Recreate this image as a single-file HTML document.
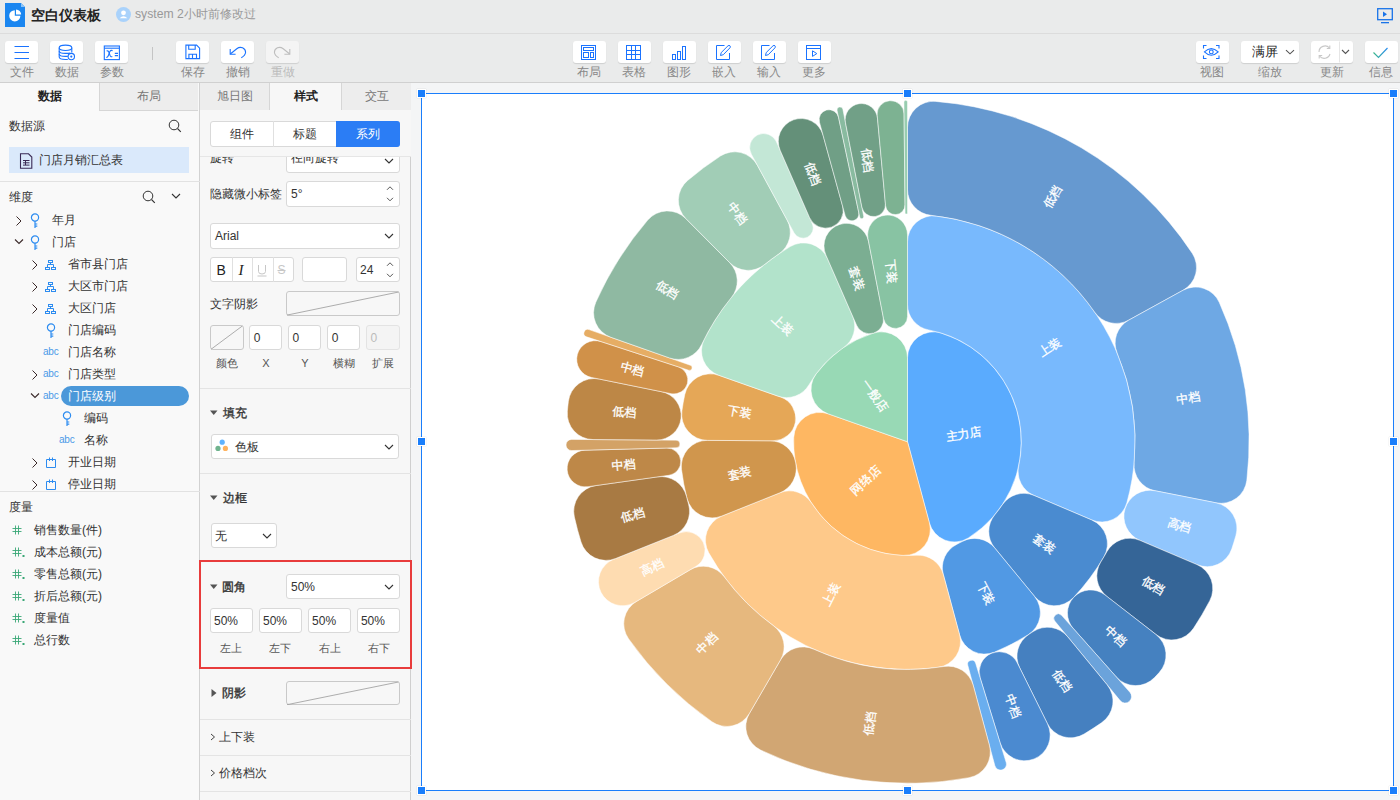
<!DOCTYPE html>
<html><head><meta charset="utf-8">
<style>
*{box-sizing:border-box;margin:0;padding:0}
html,body{width:1400px;height:800px;overflow:hidden;background:#eaebeb;font-family:"Liberation Sans",sans-serif;color:#333;font-size:12px}
.abs{position:absolute}
#titlebar{left:0;top:0;width:1400px;height:34px;background:#eaebeb;border-bottom:1px solid #dcdcdc}
#toolbar{left:0;top:34px;width:1400px;height:49px;background:#eaebeb;border-bottom:1px solid #d0d0d0}
.tb{position:absolute;top:7px;height:22px;width:33px;background:#fff;border-radius:3px;box-shadow:0 1px 1px rgba(0,0,0,.12)}
.tb svg{position:absolute;left:0;top:0}
.tl{position:absolute;top:31px;width:60px;text-align:center;font-size:12px;color:#888;line-height:14px}
#p1{left:0;top:83px;width:200px;height:717px;background:#f9f9f9;border-right:1px solid #d2d2d2}
#p2{left:200px;top:83px;width:211px;height:717px;background:#f7f7f7;border-right:1px solid #cfcfcf}
#canvas{left:411px;top:83px;width:989px;height:717px;background-color:#f4f5f6}
.tab{position:absolute;top:0;height:28px;line-height:27px;text-align:center;font-size:12px}
.tab.off{background:#ededed;color:#777;border-bottom:1px solid #d6d6d6;border-left:1px solid #d6d6d6}
.tab.on{color:#222;font-weight:bold}
.row{position:absolute;height:22px;line-height:22px;font-size:12px;color:#333;white-space:nowrap}
.sec{position:absolute;font-size:12px;color:#555}
.inp{position:absolute;background:#fff;border:1px solid #d6d6d6;border-radius:3px;height:26px;line-height:24px;font-size:12px;color:#333;padding-left:4px}
.lab{position:absolute;font-size:10px;color:#777;text-align:center;line-height:12px}
.hd{position:absolute;font-size:12px;color:#333;line-height:16px}
.div{position:absolute;left:0;width:211px;height:1px;background:#e3e3e3}
.handle{position:absolute;width:9px;height:9px;background:#1a7efb;border:1px solid #fff;box-shadow:0 0 1px rgba(0,0,0,.2)}
.lbl text{fill:#fff;stroke:#fff;stroke-width:0.3px;font-size:12px;text-anchor:middle;dominant-baseline:central;font-family:"Liberation Sans",sans-serif}
.chev{position:absolute}
</style></head><body>

<!-- title bar -->
<div id="titlebar" class="abs">
  <svg class="abs" style="left:5px;top:3px" width="21" height="25" viewBox="0 0 21 25">
    <path d="M0 0H16L20 4V24H0Z" fill="#1a86f0"/><path d="M16 0V4H20Z" fill="#8cc4f7"/>
    <path d="M9.8 7.2A5.6 5.6 0 1 0 15.4 12.8H9.8Z" fill="#fff"/><path d="M11 6.4V11.6H16.2A5.2 5.2 0 0 0 11 6.4Z" fill="#fff"/>
  </svg>
  <div class="abs" style="left:31px;top:5px;font-size:14px;font-weight:bold;color:#222;line-height:20px">空白仪表板</div>
  <svg class="abs" style="left:116px;top:7px" width="15" height="15" viewBox="0 0 15 15"><circle cx="7.5" cy="7.5" r="7.5" fill="#a9d2fb"/><circle cx="7.5" cy="5.8" r="2.4" fill="#fff"/><path d="M3.6 11.2Q7.5 7.5 11.4 11.2Z" fill="#fff"/></svg>
  <div class="abs" style="left:135px;top:6px;font-size:12.2px;color:#999;line-height:16px">system 2小时前修改过</div>
  <svg class="abs" style="left:1377px;top:8px" width="16" height="16" viewBox="0 0 16 16"><rect x="0.7" y="0.7" width="14.6" height="11" fill="none" stroke="#1a73e8" stroke-width="1.3"/><path d="M6 3.5L10 6.2L6 8.9Z" fill="#1a73e8"/><rect x="4" y="14" width="8" height="1.3" fill="#1a73e8"/></svg>
</div>

<!-- toolbar -->
<div id="toolbar" class="abs">
<div class="tb" style="left:5px"><svg width="33" height="22" viewBox="0 0 33 22"><g stroke="#1a73ff" stroke-width="1" fill="none"><path d="M9.5 5.5H24M9.5 11.5H24M9.5 17.5H24"/></g></svg></div>
<div class="tl" style="left:-8.5px">文件</div>
<div class="tb" style="left:50px"><svg width="33" height="22" viewBox="0 0 33 22"><g stroke="#1a73ff" stroke-width="1.1" fill="none"><ellipse cx="15.5" cy="6.8" rx="6.3" ry="2.7"/><path d="M9.2 6.8V16Q9.2 18.5 15.5 18.5H17.8"/><path d="M21.8 6.8V11.6"/><path d="M9.2 9.9Q9.2 12.4 15.5 12.4Q18.6 12.4 20.2 12.1"/><path d="M9.2 12.9Q9.2 15.4 15.5 15.4H17.8"/><circle cx="21.3" cy="15.6" r="3.2" fill="#fff"/></g><circle cx="21.3" cy="15.6" r="1.1" fill="#1a73ff"/></svg></div>
<div class="tl" style="left:36.5px">数据</div>
<div class="tb" style="left:95px"><svg width="33" height="22" viewBox="0 0 33 22"><g stroke="#1a73ff" stroke-width="1.1" fill="none"><rect x="9.3" y="5" width="15.1" height="13.6"/><path d="M9.3 7.2H24.4"/><path d="M11.2 16.2Q12.6 16.8 13.6 14L14.9 10.4Q15.6 9 17.6 9.6"/><path d="M11.6 10.1Q13.3 9.2 14.1 11.8L15.1 14.6Q15.8 16.3 17.3 15.6"/><path d="M19.8 12.4H23M19.8 14.6H23"/></g></svg></div>
<div class="tl" style="left:81.5px">参数</div>
<div class="abs" style="left:152px;top:13px;width:1px;height:13px;background:#c4c4c4"></div>
<div class="tb" style="left:176px"><svg width="33" height="22" viewBox="0 0 33 22"><g stroke="#1a73ff" stroke-width="1.1" fill="none"><path d="M9.9 4.1H20.6L23.6 7.2V17.6H9.9Z"/><path d="M12.7 4.1V8.3H19.2V4.1"/><path d="M12.9 17.6V13.2H20.5V17.6M16.5 13.2V17.6"/></g></svg></div>
<div class="tl" style="left:162.5px">保存</div>
<div class="tb" style="left:221px"><svg width="33" height="22" viewBox="0 0 33 22"><g stroke="#1a73ff" stroke-width="1.1" fill="none"><path d="M9.3 13L15.8 7.7Q18.6 5.6 21.6 6.8Q24.6 8.4 24.6 11.2Q24.4 14.2 20.3 16.8"/><path d="M9.2 8.1V13.2H14.6"/></g></svg></div>
<div class="tl" style="left:207.5px">撤销</div>
<div class="tb" style="left:266px;background:#f4f4f4"><svg width="33" height="22" viewBox="0 0 33 22"><g stroke="#bdbdbd" stroke-width="1.1" fill="none"><path d="M23.7 13L17.2 7.7Q14.4 5.6 11.4 6.8Q8.4 8.4 8.4 11.2Q8.6 14.2 12.7 16.8"/><path d="M23.8 8.1V13.2H18.4"/></g></svg></div>
<div class="tl" style="left:252.5px;color:#bbb">重做</div>

<div class="tb" style="left:573px"><svg width="33" height="22" viewBox="0 0 33 22"><g stroke="#1a73ff" stroke-width="1" fill="none"><rect x="8.5" y="4.5" width="14" height="14"/><rect x="10.5" y="6.5" width="10" height="3"/><rect x="10.5" y="11.5" width="5" height="5"/><rect x="17.5" y="11.5" width="3" height="5"/></g></svg></div>
<div class="tl" style="left:559px">布局</div>
<div class="tb" style="left:618px"><svg width="33" height="22" viewBox="0 0 33 22"><g stroke="#1a73ff" stroke-width="1" fill="none"><rect x="8.5" y="4.5" width="14" height="14"/><path d="M8.5 9.5H22.5M8.5 13.5H22.5M13.5 4.5V18.5M17.5 4.5V18.5"/></g></svg></div>
<div class="tl" style="left:604px">表格</div>
<div class="tb" style="left:663px"><svg width="33" height="22" viewBox="0 0 33 22"><g stroke="#1a73ff" stroke-width="1" fill="none"><rect x="9.5" y="13.5" width="3" height="5"/><rect x="14.5" y="10.5" width="3" height="8"/><rect x="19.5" y="5.5" width="3" height="13"/></g></svg></div>
<div class="tl" style="left:649px">图形</div>
<div class="tb" style="left:708px"><svg width="33" height="22" viewBox="0 0 33 22"><g stroke="#1a73ff" stroke-width="1" fill="none"><path d="M16.5 4.5H8.5V18.5H21.5V12"/><path d="M12.5 14.5L13.2 11.6L20 4.8Q21 4 22 4.8Q22.8 5.8 22 6.8L15.3 13.7Z"/></g></svg></div>
<div class="tl" style="left:694px">嵌入</div>
<div class="tb" style="left:753px"><svg width="33" height="22" viewBox="0 0 33 22"><g stroke="#1a73ff" stroke-width="1" fill="none"><path d="M16.5 4.5H8.5V18.5H21.5V12"/><path d="M12.5 14.5L13.2 11.6L20 4.8Q21 4 22 4.8Q22.8 5.8 22 6.8L15.3 13.7Z"/></g></svg></div>
<div class="tl" style="left:739px">输入</div>
<div class="tb" style="left:798px"><svg width="33" height="22" viewBox="0 0 33 22"><g stroke="#1a73ff" stroke-width="1" fill="none"><rect x="8.5" y="4.5" width="14" height="14"/><path d="M8.5 7.5H22.5"/><path d="M14.5 9.8V15.4L18.8 12.6Z"/></g></svg></div>
<div class="tl" style="left:784px">更多</div>

<div class="tb" style="left:1196px"><svg width="33" height="22" viewBox="0 0 33 22"><g stroke="#1a73ff" stroke-width="1.1" fill="none"><path d="M7.5 7.5V4.5H10.5M20 4.5H23V7.5M23 14.5V17.5H20M10.5 17.5H7.5V14.5"/><path d="M8.4 10.9Q15.3 4.2 22.2 10.9Q15.3 17.6 8.4 10.9Z"/><circle cx="15.3" cy="10.9" r="1.9"/></g></svg></div>
<div class="tl" style="left:1182px">视图</div>
<div class="tb" style="left:1241px;width:58px"><div class="abs" style="left:11px;top:3px;font-size:13px;color:#222;line-height:16px">满屏</div><svg class="abs" style="left:44px;top:7px" width="10" height="8" viewBox="0 0 10 8"><path d="M1 2.2L5 5.8L9 2.2" fill="none" stroke="#555" stroke-width="1.1"/></svg></div>
<div class="tl" style="left:1240px">缩放</div>
<div class="tb" style="left:1311px;width:42px"><svg width="42" height="22" viewBox="0 0 42 22"><g stroke="#c8c8c8" stroke-width="1.1" fill="none"><path d="M8 11A6 6 0 0 1 18.5 7"/><path d="M19 13A6 6 0 0 1 8.5 15"/><path d="M18.8 4.5V7.5H15.8M8.2 17.5V14.5H11.2"/></g><path d="M28.5 0.5V21.5" stroke="#e6e6e6"/><path d="M31 9L34.5 12.5L38 9" fill="none" stroke="#555" stroke-width="1.1"/></svg></div>
<div class="tl" style="left:1302px">更新</div>
<div class="tb" style="left:1365px;width:33px"><svg width="33" height="22" viewBox="0 0 33 22"><defs><linearGradient id="gck" x1="0" x2="1"><stop offset="0" stop-color="#3bb889"/><stop offset="1" stop-color="#2a8cf0"/></linearGradient></defs><path d="M8.5 11.5L13.5 16.5L22.5 7" fill="none" stroke="url(#gck)" stroke-width="1.2"/></svg></div>
<div class="tl" style="left:1351px">信息</div>

</div>

<div id="p1" class="abs">
<div class="tab on" style="left:0;width:99px">数据</div>
<div class="tab off" style="left:99px;width:99px">布局</div>
<div class="row" style="left:9px;top:32px;color:#333">数据源</div>
<svg class="abs" style="left:168px;top:36px" width="14" height="14" viewBox="0 0 14 14"><circle cx="6" cy="6" r="4.8" fill="none" stroke="#333" stroke-width="1"/><path d="M9.5 9.5L12.8 12.8" stroke="#333" stroke-width="1.1"/></svg>
<div class="abs" style="left:9px;top:64px;width:180px;height:26px;background:#dae9fb"></div>
<svg class="abs" style="left:19px;top:69.5px" width="14" height="16" viewBox="0 0 14 16"><path d="M1.5 0.8H9.5L12.8 4V15.2H1.5Z" fill="none" stroke="#3a2a55" stroke-width="1.1"/><path d="M4 7.5H10.5M4 9.8H10.5M4 12.1H10.5M6.5 7.5V12.1" stroke="#3a2a55" stroke-width="1"/></svg>
<div class="row" style="left:39px;top:66px;">门店月销汇总表</div>
<div class="abs" style="left:0;top:98px;width:200px;height:1px;background:#e2e2e2"></div>
<div class="row" style="left:9px;top:102.5px;color:#333">维度</div>
<svg class="abs" style="left:142px;top:106.5px" width="14" height="14" viewBox="0 0 14 14"><circle cx="6" cy="6" r="4.8" fill="none" stroke="#333" stroke-width="1"/><path d="M9.5 9.5L12.8 12.8" stroke="#333" stroke-width="1.1"/></svg>
<svg class="abs" style="left:171px;top:109px" width="10" height="8" viewBox="0 0 10 8"><path d="M1 2L5 6L9 2" fill="none" stroke="#333" stroke-width="1.1"/></svg>
<div class="abs" style="left:0;top:122px;width:200px;height:286px;overflow:hidden">
<svg class="abs" style="left:14.5px;top:11.4px" width="8" height="10" viewBox="0 0 8 10"><path d="M1.5 0.5L6 5L1.5 9.5" fill="none" stroke="#3b2a2a" stroke-width="1"/></svg>
<svg class="abs" style="left:30px;top:7.5px" width="10" height="16" viewBox="0 0 10 16"><circle cx="5" cy="4.5" r="3.6" fill="none" stroke="#2d8cf0" stroke-width="1.2"/><path d="M5 8V15M5 11H7.3M5 13.2H7.3" stroke="#2d8cf0" stroke-width="1.2"/></svg>
<div class="row" style="left:52px;top:4px;color:#333">年月</div>
<svg class="abs" style="left:14px;top:33px" width="10" height="8" viewBox="0 0 10 8"><path d="M1 1.5L5 5.5L9 1.5" fill="none" stroke="#3b2a2a" stroke-width="1.1"/></svg>
<svg class="abs" style="left:30px;top:29.5px" width="10" height="16" viewBox="0 0 10 16"><circle cx="5" cy="4.5" r="3.6" fill="none" stroke="#2d8cf0" stroke-width="1.2"/><path d="M5 8V15M5 11H7.3M5 13.2H7.3" stroke="#2d8cf0" stroke-width="1.2"/></svg>
<div class="row" style="left:52px;top:26px;color:#333">门店</div>
<svg class="abs" style="left:30.5px;top:55.4px" width="8" height="10" viewBox="0 0 8 10"><path d="M1.5 0.5L6 5L1.5 9.5" fill="none" stroke="#3b2a2a" stroke-width="1"/></svg>
<svg class="abs" style="left:45px;top:54px" width="12" height="12" viewBox="0 0 12 12"><g fill="none" stroke="#2d8cf0" stroke-width="1"><rect x="3.5" y="1.5" width="4" height="2"/><rect x="0.5" y="8.5" width="4" height="2"/><rect x="6.5" y="8.5" width="4" height="2"/><path d="M5.5 3.5V5.5M2.5 5.5H8.5M2.5 5.5V8.5M8.5 5.5V8.5"/></g></svg>
<div class="row" style="left:68px;top:48px;color:#333">省市县门店</div>
<svg class="abs" style="left:30.5px;top:77.4px" width="8" height="10" viewBox="0 0 8 10"><path d="M1.5 0.5L6 5L1.5 9.5" fill="none" stroke="#3b2a2a" stroke-width="1"/></svg>
<svg class="abs" style="left:45px;top:76px" width="12" height="12" viewBox="0 0 12 12"><g fill="none" stroke="#2d8cf0" stroke-width="1"><rect x="3.5" y="1.5" width="4" height="2"/><rect x="0.5" y="8.5" width="4" height="2"/><rect x="6.5" y="8.5" width="4" height="2"/><path d="M5.5 3.5V5.5M2.5 5.5H8.5M2.5 5.5V8.5M8.5 5.5V8.5"/></g></svg>
<div class="row" style="left:68px;top:70px;color:#333">大区市门店</div>
<svg class="abs" style="left:30.5px;top:99.4px" width="8" height="10" viewBox="0 0 8 10"><path d="M1.5 0.5L6 5L1.5 9.5" fill="none" stroke="#3b2a2a" stroke-width="1"/></svg>
<svg class="abs" style="left:45px;top:98px" width="12" height="12" viewBox="0 0 12 12"><g fill="none" stroke="#2d8cf0" stroke-width="1"><rect x="3.5" y="1.5" width="4" height="2"/><rect x="0.5" y="8.5" width="4" height="2"/><rect x="6.5" y="8.5" width="4" height="2"/><path d="M5.5 3.5V5.5M2.5 5.5H8.5M2.5 5.5V8.5M8.5 5.5V8.5"/></g></svg>
<div class="row" style="left:68px;top:92px;color:#333">大区门店</div>
<svg class="abs" style="left:46px;top:117.5px" width="10" height="16" viewBox="0 0 10 16"><circle cx="5" cy="4.5" r="3.6" fill="none" stroke="#2d8cf0" stroke-width="1.2"/><path d="M5 8V15M5 11H7.3M5 13.2H7.3" stroke="#2d8cf0" stroke-width="1.2"/></svg>
<div class="row" style="left:68px;top:114px;color:#333">门店编码</div>
<div class="abs" style="left:43px;top:141px;font-size:10px;color:#4b9ae8;line-height:12px;letter-spacing:-0.2px">abc</div>
<div class="row" style="left:68px;top:136px;color:#333">门店名称</div>
<svg class="abs" style="left:30.5px;top:165.4px" width="8" height="10" viewBox="0 0 8 10"><path d="M1.5 0.5L6 5L1.5 9.5" fill="none" stroke="#3b2a2a" stroke-width="1"/></svg>
<div class="abs" style="left:43px;top:163px;font-size:10px;color:#4b9ae8;line-height:12px;letter-spacing:-0.2px">abc</div>
<div class="row" style="left:68px;top:158px;color:#333">门店类型</div>
<div class="abs" style="left:61px;top:181px;width:128px;height:20px;border-radius:10px;background:#4b98d9"></div>
<svg class="abs" style="left:30px;top:187px" width="10" height="8" viewBox="0 0 10 8"><path d="M1 1.5L5 5.5L9 1.5" fill="none" stroke="#3b2a2a" stroke-width="1.1"/></svg>
<div class="abs" style="left:43px;top:185px;font-size:10px;color:#4b9ae8;line-height:12px;letter-spacing:-0.2px">abc</div>
<div class="row" style="left:68px;top:180px;color:#fff">门店级别</div>
<svg class="abs" style="left:62px;top:205.5px" width="10" height="16" viewBox="0 0 10 16"><circle cx="5" cy="4.5" r="3.6" fill="none" stroke="#2d8cf0" stroke-width="1.2"/><path d="M5 8V15M5 11H7.3M5 13.2H7.3" stroke="#2d8cf0" stroke-width="1.2"/></svg>
<div class="row" style="left:84px;top:202px;color:#333">编码</div>
<div class="abs" style="left:59px;top:229px;font-size:10px;color:#4b9ae8;line-height:12px;letter-spacing:-0.2px">abc</div>
<div class="row" style="left:84px;top:224px;color:#333">名称</div>
<svg class="abs" style="left:30.5px;top:253.4px" width="8" height="10" viewBox="0 0 8 10"><path d="M1.5 0.5L6 5L1.5 9.5" fill="none" stroke="#3b2a2a" stroke-width="1"/></svg>
<svg class="abs" style="left:45px;top:252px" width="12" height="12" viewBox="0 0 12 12"><g fill="none" stroke="#2d8cf0" stroke-width="1"><path d="M1.5 2.5H10.5V10.5H1.5Z"/><path d="M4.5 0.5V4M7.5 0.5V4"/></g></svg>
<div class="row" style="left:68px;top:246px;color:#333">开业日期</div>
<svg class="abs" style="left:30.5px;top:275.4px" width="8" height="10" viewBox="0 0 8 10"><path d="M1.5 0.5L6 5L1.5 9.5" fill="none" stroke="#3b2a2a" stroke-width="1"/></svg>
<svg class="abs" style="left:45px;top:274px" width="12" height="12" viewBox="0 0 12 12"><g fill="none" stroke="#2d8cf0" stroke-width="1"><path d="M1.5 2.5H10.5V10.5H1.5Z"/><path d="M4.5 0.5V4M7.5 0.5V4"/></g></svg>
<div class="row" style="left:68px;top:268px;color:#333">停业日期</div>
</div>
<div class="abs" style="left:0;top:408px;width:200px;height:1px;background:#e2e2e2"></div>
<div class="row" style="left:9px;top:413px;color:#333">度量</div>
<svg class="abs" style="left:11px;top:441px" width="14" height="12" viewBox="0 0 14 12"><g stroke="#3aa776" stroke-width="0.9" fill="none"><path d="M4.5 1.5V10.5M7.5 1.5V10.5M1.5 4.5H10.5M1.5 7.5H10.5"/></g></svg>
<div class="row" style="left:34px;top:436px;">销售数量(件)</div>
<svg class="abs" style="left:11px;top:463px" width="14" height="12" viewBox="0 0 14 12"><g stroke="#3aa776" stroke-width="0.9" fill="none"><path d="M4.5 1.5V10.5M7.5 1.5V10.5M1.5 4.5H10.5M1.5 7.5H10.5"/></g><rect x="11.5" y="9" width="2" height="2" fill="#3aa776"/></svg>
<div class="row" style="left:34px;top:458px;">成本总额(元)</div>
<svg class="abs" style="left:11px;top:485px" width="14" height="12" viewBox="0 0 14 12"><g stroke="#3aa776" stroke-width="0.9" fill="none"><path d="M4.5 1.5V10.5M7.5 1.5V10.5M1.5 4.5H10.5M1.5 7.5H10.5"/></g><rect x="11.5" y="9" width="2" height="2" fill="#3aa776"/></svg>
<div class="row" style="left:34px;top:480px;">零售总额(元)</div>
<svg class="abs" style="left:11px;top:507px" width="14" height="12" viewBox="0 0 14 12"><g stroke="#3aa776" stroke-width="0.9" fill="none"><path d="M4.5 1.5V10.5M7.5 1.5V10.5M1.5 4.5H10.5M1.5 7.5H10.5"/></g><rect x="11.5" y="9" width="2" height="2" fill="#3aa776"/></svg>
<div class="row" style="left:34px;top:502px;">折后总额(元)</div>
<svg class="abs" style="left:11px;top:529px" width="14" height="12" viewBox="0 0 14 12"><g stroke="#3aa776" stroke-width="0.9" fill="none"><path d="M4.5 1.5V10.5M7.5 1.5V10.5M1.5 4.5H10.5M1.5 7.5H10.5"/></g><rect x="11.5" y="9" width="2" height="2" fill="#3aa776"/></svg>
<div class="row" style="left:34px;top:524px;">度量值</div>
<svg class="abs" style="left:11px;top:551px" width="14" height="12" viewBox="0 0 14 12"><g stroke="#3aa776" stroke-width="0.9" fill="none"><path d="M4.5 1.5V10.5M7.5 1.5V10.5M1.5 4.5H10.5M1.5 7.5H10.5"/></g><rect x="11.5" y="9" width="2" height="2" fill="#3aa776"/></svg>
<div class="row" style="left:34px;top:546px;">总行数</div>
</div>
<div id="p2" class="abs">
<div class="tab off" style="left:0;width:70px;border-left:none;border-right:1px solid #d6d6d6">旭日图</div>
<div class="tab on" style="left:70px;width:71px">样式</div>
<div class="tab off" style="left:141px;width:70px">交互</div>
<div class="abs" style="left:0;top:74px;width:211px;height:644px;overflow:hidden">
<div class="abs" style="left:86.0px;top:-7.0px;width:114.0px;height:22.5px;background:#fff;border:1px solid #d9d9d9;border-radius:3px;"></div>
<div class="abs" style="left:10.0px;top:-7.0px;font-size:12px;line-height:16px;white-space:nowrap;color:#333;color:#333">旋转</div>
<div class="abs" style="left:91.0px;top:-7.0px;font-size:12px;line-height:16px;white-space:nowrap;color:#333;">径向旋转</div>
<svg class="abs" style="left:184.0px;top:0.0px" width="10" height="8" viewBox="0 0 10 8"><path d="M1 2L5 6L9 2" fill="none" stroke="#333" stroke-width="1.1"/></svg>
<div class="abs" style="left:10.0px;top:28.6px;font-size:12px;line-height:16px;white-space:nowrap;color:#333;">隐藏微小标签</div>
<div class="abs" style="left:86.0px;top:24.0px;width:114.0px;height:25.5px;background:#fff;border:1px solid #d9d9d9;border-radius:3px;"></div>
<div class="abs" style="left:91.0px;top:28.8px;font-size:12px;line-height:16px;white-space:nowrap;color:#333;">5°</div>
<svg class="abs" style="left:185.0px;top:28.8px" width="10" height="16" viewBox="0 0 10 16"><path d="M2 3.8L5 0.8L8 3.8M2 11.8L5 14.8L8 11.8" fill="none" stroke="#444" stroke-width="0.9"/></svg>
<div class="abs" style="left:10.0px;top:66.0px;width:190.0px;height:25.5px;background:#fff;border:1px solid #d9d9d9;border-radius:3px;"></div>
<div class="abs" style="left:15.0px;top:71.0px;font-size:12px;line-height:16px;white-space:nowrap;color:#333;">Arial</div>
<svg class="abs" style="left:184.0px;top:75.0px" width="10" height="8" viewBox="0 0 10 8"><path d="M1 2L5 6L9 2" fill="none" stroke="#333" stroke-width="1.1"/></svg>
<div class="abs" style="left:10.0px;top:100.3px;width:83.5px;height:25.2px;background:#fff;border:1px solid #d9d9d9;border-radius:3px;"></div>
<div class="abs" style="left:31.6px;top:100.3px;width:1px;height:25px;background:#e0e0e0"></div>
<div class="abs" style="left:52.4px;top:100.3px;width:1px;height:25px;background:#e0e0e0"></div>
<div class="abs" style="left:72.6px;top:100.3px;width:1px;height:25px;background:#e0e0e0"></div>
<div class="abs" style="left:16.5px;top:105.0px;font-size:14px;line-height:16px;white-space:nowrap;color:#333;font-weight:normal;color:#222">B</div>
<div class="abs" style="left:38.5px;top:105.0px;font-family:'Liberation Serif',serif;font-style:italic;font-size:15px;line-height:16px;color:#222">I</div>
<svg class="abs" style="left:56.0px;top:105.0px" width="12" height="16"><path d="M2.5 3V9.5Q2.5 12 6 12Q9.5 12 9.5 9.5V3M1.5 14H10.5" fill="none" stroke="#c7c7c7" stroke-width="1"/></svg>
<div class="abs" style="left:77.5px;top:105.0px;font-size:12px;line-height:16px;white-space:nowrap;color:#333;color:#c7c7c7;text-decoration:line-through">S</div>
<div class="abs" style="left:102.0px;top:100.3px;width:44.5px;height:25.2px;background:#fff;border:1px solid #d9d9d9;border-radius:3px;"></div>
<div class="abs" style="left:155.5px;top:100.3px;width:44.5px;height:25.2px;background:#fff;border:1px solid #d9d9d9;border-radius:3px;"></div>
<div class="abs" style="left:160.0px;top:105.0px;font-size:12px;line-height:16px;white-space:nowrap;color:#333;">24</div>
<svg class="abs" style="left:185.0px;top:105.0px" width="10" height="16" viewBox="0 0 10 16"><path d="M2 3.8L5 0.8L8 3.8M2 11.8L5 14.8L8 11.8" fill="none" stroke="#444" stroke-width="0.9"/></svg>
<div class="abs" style="left:10.0px;top:138.6px;font-size:12px;line-height:16px;white-space:nowrap;color:#333;">文字阴影</div>
<div class="abs" style="left:86.4px;top:134.4px;width:113.6px;height:25.1px;background:#fff;border:1px solid #d9d9d9;border-radius:3px;background:transparent;border-color:#c9c9c9"></div>
<svg class="abs" style="left:86.4px;top:134.4px" width="113.6" height="25.1"><path d="M1 24.1L112.6 1" stroke="#999" stroke-width="0.8"/></svg>
<div class="abs" style="left:10.3px;top:168.0px;width:33.3px;height:25.3px;background:#fff;border:1px solid #d9d9d9;border-radius:3px;background:transparent;border-color:#c9c9c9"></div>
<svg class="abs" style="left:10.3px;top:168.0px" width="33.3" height="25.3"><path d="M1 24.3L32.3 1" stroke="#999" stroke-width="0.8"/></svg>
<div class="abs" style="left:49.2px;top:168.0px;width:33.3px;height:25.3px;background:#fff;border:1px solid #d9d9d9;border-radius:3px;"></div>
<div class="abs" style="left:53.7px;top:173.0px;font-size:12px;line-height:16px;white-space:nowrap;color:#333;">0</div>
<div class="abs" style="left:88.1px;top:168.0px;width:33.3px;height:25.3px;background:#fff;border:1px solid #d9d9d9;border-radius:3px;"></div>
<div class="abs" style="left:92.6px;top:173.0px;font-size:12px;line-height:16px;white-space:nowrap;color:#333;">0</div>
<div class="abs" style="left:127.2px;top:168.0px;width:33.3px;height:25.3px;background:#fff;border:1px solid #d9d9d9;border-radius:3px;"></div>
<div class="abs" style="left:131.7px;top:173.0px;font-size:12px;line-height:16px;white-space:nowrap;color:#333;">0</div>
<div class="abs" style="left:166.0px;top:168.0px;width:33.5px;height:25.3px;background:#f4f4f4;border:1px solid #e3e3e3;border-radius:3px"></div>
<div class="abs" style="left:170.5px;top:173.0px;font-size:12px;line-height:16px;white-space:nowrap;color:#333;color:#bbb">0</div>
<div class="abs" style="left:-3.1px;top:197.6px;width:60px;text-align:center;font-size:12px;line-height:16px;white-space:nowrap;color:#333;color:#555;font-size:11px">颜色</div>
<div class="abs" style="left:36.0px;top:197.6px;width:60px;text-align:center;font-size:12px;line-height:16px;white-space:nowrap;color:#333;color:#555;font-size:11px">X</div>
<div class="abs" style="left:75.0px;top:197.6px;width:60px;text-align:center;font-size:12px;line-height:16px;white-space:nowrap;color:#333;color:#555;font-size:11px">Y</div>
<div class="abs" style="left:114.0px;top:197.6px;width:60px;text-align:center;font-size:12px;line-height:16px;white-space:nowrap;color:#333;color:#555;font-size:11px">横糊</div>
<div class="abs" style="left:153.0px;top:197.6px;width:60px;text-align:center;font-size:12px;line-height:16px;white-space:nowrap;color:#333;color:#555;font-size:11px">扩展</div>
<div class="abs" style="left:0;top:230.5px;width:211px;height:1px;background:#e4e4e4"></div>
<svg class="abs" style="left:10.0px;top:252.6px" width="8" height="6" viewBox="0 0 8 6"><path d="M0 0.5H7.5L3.75 5Z" fill="#555"/></svg>
<div class="abs" style="left:22.5px;top:247.6px;font-size:12px;line-height:16px;white-space:nowrap;color:#333;color:#333;-webkit-text-stroke:0.35px #333">填充</div>
<div class="abs" style="left:10.6px;top:277.4px;width:188.9px;height:25.0px;background:#fff;border:1px solid #d9d9d9;border-radius:3px;"></div>
<svg class="abs" style="left:15.0px;top:282.0px" width="14" height="14"><circle cx="7.2" cy="3.2" r="2.6" fill="#5fb3ff"/><circle cx="3" cy="9.4" r="2.6" fill="#6fb38e"/><circle cx="10.4" cy="9.4" r="2.6" fill="#ffb35f"/></svg>
<div class="abs" style="left:34.5px;top:282.0px;font-size:12px;line-height:16px;white-space:nowrap;color:#333;">色板</div>
<svg class="abs" style="left:184.0px;top:286.0px" width="10" height="8" viewBox="0 0 10 8"><path d="M1 2L5 6L9 2" fill="none" stroke="#333" stroke-width="1.1"/></svg>
<div class="abs" style="left:0;top:315.5px;width:211px;height:1px;background:#e4e4e4"></div>
<svg class="abs" style="left:10.0px;top:338.0px" width="8" height="6" viewBox="0 0 8 6"><path d="M0 0.5H7.5L3.75 5Z" fill="#555"/></svg>
<div class="abs" style="left:22.5px;top:333.0px;font-size:12px;line-height:16px;white-space:nowrap;color:#333;color:#333;-webkit-text-stroke:0.35px #333">边框</div>
<div class="abs" style="left:10.6px;top:366.4px;width:66.9px;height:25.0px;background:#fff;border:1px solid #d9d9d9;border-radius:3px;"></div>
<div class="abs" style="left:15.0px;top:371.0px;font-size:12px;line-height:16px;white-space:nowrap;color:#333;">无</div>
<svg class="abs" style="left:62.0px;top:374.5px" width="10" height="8" viewBox="0 0 10 8"><path d="M1 2L5 6L9 2" fill="none" stroke="#333" stroke-width="1.1"/></svg>
<svg class="abs" style="left:10.0px;top:427.0px" width="8" height="6" viewBox="0 0 8 6"><path d="M0 0.5H7.5L3.75 5Z" fill="#555"/></svg>
<div class="abs" style="left:21.6px;top:422.0px;font-size:12px;line-height:16px;white-space:nowrap;color:#333;color:#333;-webkit-text-stroke:0.35px #333">圆角</div>
<div class="abs" style="left:86.3px;top:417.4px;width:113.4px;height:25.0px;background:#fff;border:1px solid #d9d9d9;border-radius:3px;"></div>
<div class="abs" style="left:91.0px;top:422.0px;font-size:12px;line-height:16px;white-space:nowrap;color:#333;">50%</div>
<svg class="abs" style="left:184.0px;top:426.0px" width="10" height="8" viewBox="0 0 10 8"><path d="M1 2L5 6L9 2" fill="none" stroke="#333" stroke-width="1.1"/></svg>
<div class="abs" style="left:10.0px;top:451.4px;width:42.8px;height:25.0px;background:#fff;border:1px solid #d9d9d9;border-radius:3px;"></div>
<div class="abs" style="left:14.0px;top:456.0px;font-size:12px;line-height:16px;white-space:nowrap;color:#333;">50%</div>
<div class="abs" style="left:59.0px;top:451.4px;width:42.9px;height:25.0px;background:#fff;border:1px solid #d9d9d9;border-radius:3px;"></div>
<div class="abs" style="left:63.0px;top:456.0px;font-size:12px;line-height:16px;white-space:nowrap;color:#333;">50%</div>
<div class="abs" style="left:108.1px;top:451.4px;width:42.5px;height:25.0px;background:#fff;border:1px solid #d9d9d9;border-radius:3px;"></div>
<div class="abs" style="left:112.1px;top:456.0px;font-size:12px;line-height:16px;white-space:nowrap;color:#333;">50%</div>
<div class="abs" style="left:156.9px;top:451.4px;width:42.8px;height:25.0px;background:#fff;border:1px solid #d9d9d9;border-radius:3px;"></div>
<div class="abs" style="left:160.9px;top:456.0px;font-size:12px;line-height:16px;white-space:nowrap;color:#333;">50%</div>
<div class="abs" style="left:1.0px;top:482.5px;width:60px;text-align:center;font-size:12px;line-height:16px;white-space:nowrap;color:#333;color:#555;font-size:11px">左上</div>
<div class="abs" style="left:50.3px;top:482.5px;width:60px;text-align:center;font-size:12px;line-height:16px;white-space:nowrap;color:#333;color:#555;font-size:11px">左下</div>
<div class="abs" style="left:100.0px;top:482.5px;width:60px;text-align:center;font-size:12px;line-height:16px;white-space:nowrap;color:#333;color:#555;font-size:11px">右上</div>
<div class="abs" style="left:149.4px;top:482.5px;width:60px;text-align:center;font-size:12px;line-height:16px;white-space:nowrap;color:#333;color:#555;font-size:11px">右下</div>
<svg class="abs" style="left:11.0px;top:532.0px" width="6" height="8" viewBox="0 0 6 8"><path d="M0.5 0L5.5 4L0.5 8Z" fill="#555"/></svg>
<div class="abs" style="left:21.6px;top:527.8px;font-size:12px;line-height:16px;white-space:nowrap;color:#333;color:#333;-webkit-text-stroke:0.35px #333">阴影</div>
<div class="abs" style="left:86.3px;top:523.6px;width:113.4px;height:24.7px;background:#fff;border:1px solid #d9d9d9;border-radius:3px;background:transparent;border-color:#c9c9c9"></div>
<svg class="abs" style="left:86.3px;top:523.6px" width="113.4" height="24.7"><path d="M1 23.7L112.4 1" stroke="#999" stroke-width="0.8"/></svg>
<div class="abs" style="left:0;top:561.8px;width:211px;height:1px;background:#e4e4e4"></div>
<svg class="abs" style="left:10.0px;top:576.0px" width="6" height="8" viewBox="0 0 6 8"><path d="M1 1L4.5 4L1 7" fill="none" stroke="#444" stroke-width="1"/></svg>
<div class="abs" style="left:19.4px;top:572.0px;font-size:12px;line-height:16px;white-space:nowrap;color:#333;">上下装</div>
<div class="abs" style="left:0;top:597.7px;width:211px;height:1px;background:#e4e4e4"></div>
<svg class="abs" style="left:10.0px;top:611.5px" width="6" height="8" viewBox="0 0 6 8"><path d="M1 1L4.5 4L1 7" fill="none" stroke="#444" stroke-width="1"/></svg>
<div class="abs" style="left:19.4px;top:607.5px;font-size:12px;line-height:16px;white-space:nowrap;color:#333;">价格档次</div>
<div class="abs" style="left:0;top:633.6px;width:211px;height:1px;background:#e4e4e4"></div>
</div>
<div class="abs" style="left:0;top:27px;width:211px;height:47px;background:#f7f7f7;border-bottom:1px solid #e6e6e6"></div>
<div class="abs" style="left:10.3px;top:38.2px;width:189.5px;height:25.6px;background:#fff;border:1px solid #d9d9d9;border-radius:3px"></div>
<div class="abs" style="left:73.3px;top:38.2px;width:1px;height:25.6px;background:#e0e0e0"></div>
<div class="abs" style="left:136.3px;top:38.2px;width:63.5px;height:25.6px;background:#2b7df5;border-radius:0 3px 3px 0"></div>
<div class="abs" style="left:11.8px;top:43.0px;width:60px;text-align:center;font-size:12px;line-height:16px;white-space:nowrap;color:#333;">组件</div>
<div class="abs" style="left:74.8px;top:43.0px;width:60px;text-align:center;font-size:12px;line-height:16px;white-space:nowrap;color:#333;">标题</div>
<div class="abs" style="left:138.0px;top:43.0px;width:60px;text-align:center;font-size:12px;line-height:16px;white-space:nowrap;color:#333;color:#fff">系列</div>
<div class="abs" style="left:-1px;top:476.5px;width:213px;height:109px;border:2px solid #e83c3c;z-index:5"></div>
</div>
<div id="canvas" class="abs">
  <div class="abs" style="left:11px;top:11px;width:972px;height:697px;background:#fff"></div>
</div>
<svg class="abs" style="left:0;top:0" width="1400" height="800">
<g stroke="#fff" stroke-width="1" stroke-opacity="0.5"><path d="M907.50 357.85L907.50 357.85A26.00 26.00 0 0 1 941.20 333.02L941.20 333.02A113.83 113.83 0 0 1 968.36 537.95L968.36 537.95A26.00 26.00 0 0 1 929.36 522.75L907.50 441.75Z" fill="#5aabfe"/><path d="M929.36 522.75L929.36 522.75A26.00 26.00 0 0 1 903.29 555.51L903.29 555.51A113.83 113.83 0 0 1 793.75 437.42L793.75 437.42A26.00 26.00 0 0 1 828.37 413.88L907.50 441.75Z" fill="#feb762"/><path d="M828.37 413.88L828.37 413.88A26.00 26.00 0 0 1 816.13 373.85L816.13 373.85A113.83 113.83 0 0 1 873.80 333.02L873.80 333.02A26.00 26.00 0 0 1 907.50 357.85L907.50 441.75Z" fill="#98d9b5"/><path d="M907.50 241.77L907.50 241.77A26.00 26.00 0 0 1 936.85 215.98L936.85 215.98A227.67 227.67 0 0 1 1126.79 502.95L1126.79 502.95A26.00 26.00 0 0 1 1091.59 519.89L1033.97 495.43L1033.97 495.43A26.00 26.00 0 0 1 1018.73 465.97L1018.73 465.97A113.83 113.83 0 0 0 928.67 329.90L928.67 329.90A26.00 26.00 0 0 1 907.50 304.36Z" fill="#78b9fd"/><path d="M1091.59 519.89L1091.59 519.89A26.00 26.00 0 0 1 1103.85 556.98L1103.85 556.98A227.67 227.67 0 0 1 1073.48 597.58L1073.48 597.58A26.00 26.00 0 0 1 1034.44 596.28L994.71 547.92L994.71 547.92A26.00 26.00 0 0 1 994.85 514.74L994.85 514.74A113.83 113.83 0 0 0 1002.19 504.94L1002.19 504.94A26.00 26.00 0 0 1 1033.97 495.43Z" fill="#4a8bd0"/><path d="M1034.44 596.28L1034.44 596.28A26.00 26.00 0 0 1 1028.12 634.84L1028.12 634.84A227.67 227.67 0 0 1 994.65 652.08L994.65 652.08A26.00 26.00 0 0 1 959.60 634.83L943.29 574.40L943.29 574.40A26.00 26.00 0 0 1 957.07 544.22L957.07 544.22A113.83 113.83 0 0 0 962.14 541.61L962.14 541.61A26.00 26.00 0 0 1 994.71 547.92Z" fill="#5199e4"/><path d="M959.60 634.83L959.60 634.83A26.00 26.00 0 0 1 937.97 667.37L937.97 667.37A227.67 227.67 0 0 1 708.78 552.85L708.78 552.85A26.00 26.00 0 0 1 721.82 516.02L779.93 492.77L779.93 492.77A26.00 26.00 0 0 1 811.51 502.94L811.51 502.94A113.83 113.83 0 0 0 916.20 555.25L916.20 555.25A26.00 26.00 0 0 1 943.29 574.40Z" fill="#fec98a"/><path d="M721.82 516.02L721.82 516.02A26.00 26.00 0 0 1 686.98 498.34L686.98 498.34A227.67 227.67 0 0 1 681.53 469.53L681.53 469.53A26.00 26.00 0 0 1 707.52 440.35L770.11 440.79L770.11 440.79A26.00 26.00 0 0 1 795.51 462.13L795.51 462.13A113.83 113.83 0 0 0 795.79 463.63L795.79 463.63A26.00 26.00 0 0 1 779.93 492.77Z" fill="#d0964d"/><path d="M707.52 440.35L707.52 440.35A26.00 26.00 0 0 1 681.94 410.82L681.94 410.82A227.67 227.67 0 0 1 684.80 394.44L684.80 394.44A26.00 26.00 0 0 1 718.87 375.32L780.67 397.09L780.67 397.09A22.50 22.50 0 0 1 773.04 440.81Z" fill="#e5a757"/><path d="M718.87 375.32L718.87 375.32A26.00 26.00 0 0 1 704.30 339.07L704.30 339.07A227.67 227.67 0 0 1 790.22 246.62L790.22 246.62A26.00 26.00 0 0 1 827.44 258.49L852.49 315.85L852.49 315.85A26.00 26.00 0 0 1 843.33 347.73L843.33 347.73A113.83 113.83 0 0 0 809.03 384.63L809.03 384.63A26.00 26.00 0 0 1 777.91 396.11Z" fill="#b2e3cb"/><path d="M825.86 254.89L825.86 254.89A22.51 22.51 0 0 1 839.80 224.38A22.51 22.51 0 0 1 868.59 241.58L883.25 316.99L883.25 316.99A14.03 14.03 0 0 1 856.62 325.29Z" fill="#7bae92"/><path d="M868.04 238.75L868.04 238.75A19.91 19.91 0 0 1 885.68 215.13A19.91 19.91 0 0 1 907.50 234.95L907.50 316.43L907.50 316.43A12.07 12.07 0 0 1 883.59 318.73Z" fill="#88c3a3"/><path d="M907.50 127.32L907.50 127.32A26.00 26.00 0 0 1 935.64 101.41L935.64 101.41A341.50 341.50 0 0 1 1192.18 253.13L1192.18 253.13A26.00 26.00 0 0 1 1183.03 290.27L1128.62 320.19L1128.62 320.19A26.00 26.00 0 0 1 1094.71 312.20L1094.71 312.20A227.67 227.67 0 0 0 930.84 215.28L930.84 215.28A26.00 26.00 0 0 1 907.50 189.42Z" fill="#6699d0"/><path d="M1183.03 290.27L1183.03 290.27A26.00 26.00 0 0 1 1219.30 302.45L1219.30 302.45A341.50 341.50 0 0 1 1246.82 480.25L1246.82 480.25A26.00 26.00 0 0 1 1215.94 502.82L1155.03 490.76L1155.03 490.76A26.00 26.00 0 0 1 1134.19 462.85L1134.19 462.85A227.67 227.67 0 0 0 1117.20 353.10L1117.20 353.10A26.00 26.00 0 0 1 1128.62 320.19Z" fill="#6ea8e4"/><path d="M1215.94 502.82L1215.94 502.82A26.00 26.00 0 0 1 1235.89 535.46L1235.89 535.46A341.50 341.50 0 0 1 1231.78 548.83L1231.78 548.83A26.00 26.00 0 0 1 1196.93 564.61L1139.77 540.34L1139.77 540.34A26.00 26.00 0 0 1 1125.08 508.76L1125.08 508.76A227.67 227.67 0 0 0 1125.12 508.63L1125.12 508.63A26.00 26.00 0 0 1 1155.03 490.76Z" fill="#91c6fd"/><path d="M1196.93 564.61L1196.93 564.61A26.00 26.00 0 0 1 1209.79 600.64L1209.79 600.64A341.50 341.50 0 0 1 1193.67 628.11L1193.67 628.11A26.00 26.00 0 0 1 1155.95 634.46L1106.88 596.41L1106.88 596.41A26.00 26.00 0 0 1 1100.75 562.12L1100.75 562.12A227.67 227.67 0 0 0 1106.85 551.72L1106.85 551.72A26.00 26.00 0 0 1 1139.77 540.34Z" fill="#356597"/><path d="M1155.95 634.46L1155.95 634.46A26.00 26.00 0 0 1 1159.17 672.58L1159.17 672.58A341.50 341.50 0 0 1 1154.50 677.57L1154.50 677.57A26.00 26.00 0 0 1 1116.26 676.88L1073.32 628.52L1073.32 628.52A23.17 23.17 0 0 1 1104.85 594.83Z" fill="#4581c0"/><path d="M1129.92 692.27L1129.92 692.27A6.43 6.43 0 0 1 1129.29 701.43A6.43 6.43 0 0 1 1120.14 700.62L1054.81 621.09L1054.81 621.09A4.46 4.46 0 0 1 1061.58 615.30Z" fill="#6ba3db"/><path d="M1107.08 684.72L1107.08 684.72A26.00 26.00 0 0 1 1101.78 722.60L1101.78 722.60A341.50 341.50 0 0 1 1084.03 734.08L1084.03 734.08A26.00 26.00 0 0 1 1047.31 723.39L1019.70 667.77L1019.70 667.77A26.00 26.00 0 0 1 1029.10 634.22L1029.10 634.22A227.67 227.67 0 0 0 1033.21 631.56L1033.21 631.56A26.00 26.00 0 0 1 1067.66 636.73Z" fill="#4580c0"/><path d="M1047.49 723.77L1047.49 723.77A25.61 25.61 0 0 1 1034.05 758.94A25.61 25.61 0 0 1 1000.08 742.68L980.11 677.77L980.11 677.77A20.08 20.08 0 0 1 1017.30 662.93Z" fill="#4b8ad0"/><path d="M1006.18 762.51L1006.18 762.51A5.86 5.86 0 0 1 1002.20 769.86A5.86 5.86 0 0 1 994.92 765.75L967.85 665.43L967.85 665.43A4.04 4.04 0 0 1 975.62 663.18Z" fill="#6aaeef"/><path d="M989.41 745.32L989.41 745.32A26.00 26.00 0 0 1 968.99 777.67L968.99 777.67A341.50 341.50 0 0 1 760.63 750.05L760.63 750.05A26.00 26.00 0 0 1 749.34 713.50L780.57 659.83L780.57 659.83A26.00 26.00 0 0 1 813.75 649.22L813.75 649.22A227.67 227.67 0 0 0 943.97 666.48L943.97 666.48A26.00 26.00 0 0 1 973.23 685.37Z" fill="#d1a673"/><path d="M749.34 713.50L749.34 713.50A26.00 26.00 0 0 1 711.98 721.74L711.98 721.74A341.50 341.50 0 0 1 628.54 638.73L628.54 638.73A26.00 26.00 0 0 1 636.58 601.33L690.08 569.82L690.08 569.82A26.00 26.00 0 0 1 724.21 576.80L724.21 576.80A227.67 227.67 0 0 0 773.41 625.74L773.41 625.74A26.00 26.00 0 0 1 780.57 659.83Z" fill="#e6b87e"/><path d="M634.79 602.39L634.79 602.39A24.08 24.08 0 0 1 600.95 592.26A24.08 24.08 0 0 1 613.63 559.29L679.42 532.97L679.42 532.97A18.69 18.69 0 0 1 695.85 566.42Z" fill="#fedcb1"/><path d="M615.56 558.52L615.56 558.52A26.00 26.00 0 0 1 581.05 542.01L581.05 542.01A341.50 341.50 0 0 1 574.39 516.98L574.39 516.98A26.00 26.00 0 0 1 596.13 485.51L657.62 476.87L657.62 476.87A26.00 26.00 0 0 1 686.48 496.38L686.48 496.38A227.67 227.67 0 0 0 688.56 504.19L688.56 504.19A26.00 26.00 0 0 1 673.21 535.46Z" fill="#a87a43"/><path d="M587.98 486.66L587.98 486.66A18.32 18.32 0 0 1 567.17 470.03A18.32 18.32 0 0 1 584.95 450.20L666.62 448.06L666.62 448.06A13.68 13.68 0 0 1 668.88 475.29Z" fill="#be8848"/><path d="M571.73 450.54L571.73 450.54A5.57 5.57 0 0 1 566.02 445.03A5.57 5.57 0 0 1 571.62 439.41L676.03 440.13L676.03 440.13A3.84 3.84 0 0 1 676.11 447.81Z" fill="#d3a266"/><path d="M593.08 439.55L593.08 439.55A26.00 26.00 0 0 1 567.37 411.23L567.37 411.23A341.50 341.50 0 0 1 568.38 401.48L568.38 401.48A26.00 26.00 0 0 1 599.39 379.06L661.67 391.74L661.67 391.74A24.38 24.38 0 0 1 656.64 440.00Z" fill="#bd8746"/><path d="M591.60 377.48L591.60 377.48A18.59 18.59 0 0 1 577.33 354.52A18.59 18.59 0 0 1 601.08 341.60L678.26 366.82L678.26 366.82A13.91 13.91 0 0 1 671.17 393.67Z" fill="#d09149"/><path d="M586.56 336.85L586.56 336.85A3.83 3.83 0 0 1 584.12 331.98A3.83 3.83 0 0 1 589.02 329.60L690.31 365.27L690.31 365.27A2.61 2.61 0 0 1 691.92 368.57A2.61 2.61 0 0 1 688.63 370.21Z" fill="#e6ad64"/><path d="M610.93 337.31L610.93 337.31A26.00 26.00 0 0 1 595.83 302.16L595.83 302.16A341.50 341.50 0 0 1 647.72 220.09L647.72 220.09A26.00 26.00 0 0 1 685.94 218.64L729.70 262.70L729.70 262.70A26.00 26.00 0 0 1 731.37 297.50L731.37 297.50A227.67 227.67 0 0 0 701.64 344.52L701.64 344.52A26.00 26.00 0 0 1 669.50 357.94Z" fill="#8fb9a2"/><path d="M685.94 218.64L685.94 218.64A26.00 26.00 0 0 1 687.66 180.43L687.66 180.43A341.50 341.50 0 0 1 720.37 156.08L720.37 156.08A26.00 26.00 0 0 1 757.47 165.43L787.10 220.00L787.10 220.00A26.00 26.00 0 0 1 778.93 253.86L778.93 253.86A227.67 227.67 0 0 0 764.48 264.61L764.48 264.61A26.00 26.00 0 0 1 729.70 262.70Z" fill="#a1cdb6"/><path d="M751.37 154.20L751.37 154.20A14.00 14.00 0 0 1 757.53 134.94A14.00 14.00 0 0 1 776.51 141.92L812.37 224.01L812.37 224.01A10.17 10.17 0 0 1 794.12 232.93Z" fill="#c3e7d6"/><path d="M780.23 150.44L780.23 150.44A22.79 22.79 0 0 1 793.50 119.84A22.79 22.79 0 0 1 823.08 135.27L842.55 205.96L842.55 205.96A17.53 17.53 0 0 1 809.59 217.64Z" fill="#649079"/><path d="M819.46 122.14L819.46 122.14A9.84 9.84 0 0 1 826.62 109.97A9.84 9.84 0 0 1 838.57 117.48L858.74 212.35L858.74 212.35A6.96 6.96 0 0 1 845.22 215.65Z" fill="#709f86"/><path d="M837.12 110.61L837.12 110.61A2.95 2.95 0 0 1 839.42 107.11A2.95 2.95 0 0 1 842.90 109.44L863.68 216.31L863.68 216.31A2.00 2.00 0 0 1 862.11 218.65A2.00 2.00 0 0 1 859.75 217.11Z" fill="#89bba0"/><path d="M845.50 122.80L845.50 122.80A16.18 16.18 0 0 1 859.09 103.70A16.18 16.18 0 0 1 877.49 118.22L885.40 203.49L885.40 203.49A11.91 11.91 0 0 1 861.84 206.86Z" fill="#71a087"/><path d="M877.22 115.38L877.22 115.38A13.45 13.45 0 0 1 889.92 100.70A13.45 13.45 0 0 1 904.07 114.00L905.02 204.56L905.02 204.56A9.73 9.73 0 0 1 885.59 205.56Z" fill="#7db292"/><path d="M903.94 102.05L903.94 102.05A1.78 1.78 0 0 1 905.71 100.25A1.78 1.78 0 0 1 907.50 102.03L907.50 212.89L907.50 212.89A1.20 1.20 0 0 1 906.31 214.09A1.20 1.20 0 0 1 905.10 212.90Z" fill="#98cdb0"/></g><g class="lbl"><text x="963.92" y="434.27" transform="rotate(-7.55 963.92 434.27)">主力店</text><text x="865.77" y="480.46" transform="rotate(-42.85 865.77 480.46)">网络店</text><text x="874.61" y="395.30" transform="rotate(54.70 874.61 395.30)">一般店</text><text x="1049.89" y="347.51" transform="rotate(-33.50 1049.89 347.51)">上装</text><text x="1044.22" y="544.03" transform="rotate(36.80 1044.22 544.03)">套装</text><text x="985.68" y="593.55" transform="rotate(62.75 985.68 593.55)">下装</text><text x="831.18" y="594.49" transform="rotate(-63.45 831.18 594.49)">上装</text><text x="739.72" y="473.45" transform="rotate(-10.70 739.72 473.45)">套装</text><text x="739.29" y="412.39" transform="rotate(9.90 739.29 412.39)">下装</text><text x="782.42" y="325.52" transform="rotate(42.90 782.42 325.52)">上装</text><text x="856.72" y="278.72" transform="rotate(72.70 856.72 278.72)">套装</text><text x="891.13" y="271.79" transform="rotate(84.50 891.13 271.79)">下装</text><text x="1052.36" y="196.80" transform="rotate(-59.40 1052.36 196.80)">低档</text><text x="1188.73" y="398.21" transform="rotate(-8.80 1188.73 398.21)">中档</text><text x="1179.50" y="525.43" transform="rotate(17.10 1179.50 525.43)">高档</text><text x="1152.96" y="585.76" transform="rotate(30.40 1152.96 585.76)">低档</text><text x="1115.29" y="636.20" transform="rotate(43.10 1115.29 636.20)">中档</text><text x="1062.08" y="680.69" transform="rotate(57.10 1062.08 680.69)">低档</text><text x="1012.95" y="706.07" transform="rotate(68.25 1012.95 706.07)">中档</text><text x="870.11" y="723.87" transform="rotate(-82.45 870.11 723.87)">低档</text><text x="706.80" y="643.51" transform="rotate(-45.15 706.80 643.51)">中档</text><text x="652.05" y="567.17" transform="rotate(-26.15 652.05 567.17)">高档</text><text x="632.49" y="514.93" transform="rotate(-14.90 632.49 514.93)">低档</text><text x="623.89" y="465.32" transform="rotate(-4.75 623.89 465.32)">中档</text><text x="624.45" y="412.25" transform="rotate(5.95 624.45 412.25)">低档</text><text x="632.36" y="369.05" transform="rotate(14.80 632.36 369.05)">中档</text><text x="666.95" y="289.68" transform="rotate(32.30 666.95 289.68)">低档</text><text x="737.63" y="213.43" transform="rotate(53.35 737.63 213.43)">中档</text><text x="812.50" y="173.49" transform="rotate(70.50 812.50 173.49)">低档</text><text x="867.16" y="160.04" transform="rotate(81.85 867.16 160.04)">低档</text></g>
</svg>
<div class="abs" style="left:421px;top:93px;width:973px;height:698px;border:1px solid #1a7efb"></div>
<div class="handle" style="left:417px;top:89px"></div>
<div class="handle" style="left:903px;top:89px"></div>
<div class="handle" style="left:1389px;top:89px"></div>
<div class="handle" style="left:417px;top:437px"></div>
<div class="handle" style="left:1389px;top:437px"></div>
<div class="handle" style="left:417px;top:786px"></div>
<div class="handle" style="left:903px;top:786px"></div>
<div class="handle" style="left:1389px;top:786px"></div>
</body></html>
